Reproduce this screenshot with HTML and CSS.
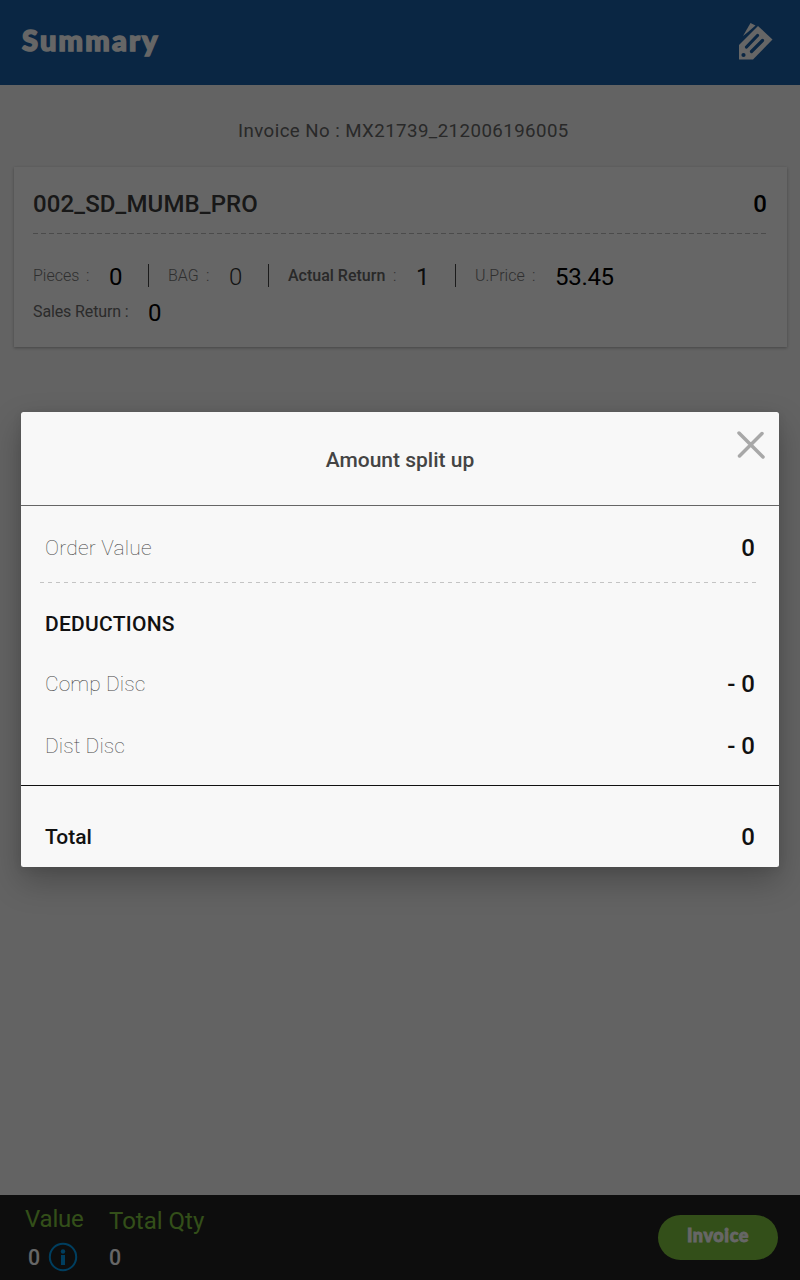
FILE: index.html
```html
<!DOCTYPE html>
<html lang="en">
<head>
<meta charset="utf-8">
<title>Summary</title>
<link rel="stylesheet" href="styles.css">
</head>
<body>
<div class="screen">
  <header class="topbar">
    <h1 class="topbar-title">Summary</h1>
    <svg class="tag-icon" width="36" height="40" viewBox="0 0 36 40">
      <path d="M5 14 L12.500 1 L17.500 3.500 L10 10 Z" fill="#fff"/>
      <path d="M20 4 L34.500 17.500 L15 37.500 H1 V23 Z" fill="#fff"/>
      <path d="M8.500 25 L19.500 13.500 M13.500 29.500 L24.500 18.500" stroke="#195fa9" stroke-width="3.200" stroke-linecap="round"/>
      <circle cx="5.500" cy="33" r="2.100" fill="#195fa9"/>
    </svg>
  </header>
  <main class="content">
    <p class="invoice-no">Invoice No : MX21739_212006196005</p>
    <section class="card">
      <div class="card-head"><span class="product">002_SD_MUMB_PRO</span><span class="product-value">0</span></div>
      <div class="dashes"></div>
      <div class="stats">
        <div class="stat pieces"><span class="label">Pieces</span><span class="colon">:</span><span class="num">0</span></div>
        <div class="stat bag"><span class="label">BAG</span><span class="colon">:</span><span class="num">0</span></div>
        <div class="stat actual"><span class="label">Actual Return</span><span class="colon">:</span><span class="num">1</span></div>
        <div class="stat price"><span class="label">U.Price</span><span class="colon">:</span><span class="num">53.45</span></div>
      </div>
      <div class="sales"><span class="label">Sales Return :</span><span class="num">0</span></div>
    </section>
  </main>
  <footer class="bottombar">
    <div class="total value"><span class="total-label">Value</span>
      <span class="total-num">0
        <svg class="info-icon" width="30" height="30" viewBox="0 0 30 30"><circle cx="15" cy="15" r="13.200" fill="none" stroke="#009cee" stroke-width="2"/><circle cx="15" cy="9.500" r="2.200" fill="#009cee"/><path d="M13 13h4v10h-4z" fill="#009cee"/></svg>
      </span>
    </div>
    <div class="total qty"><span class="total-label">Total Qty</span><span class="total-num">0</span></div>
    <button class="invoice-button">Invoice</button>
  </footer>
</div>
<div class="overlay">
  <section class="dialog">
    <div class="dialog-head">
      <h2 class="dialog-title">Amount split up</h2>
      <svg class="close-icon" width="30" height="30" viewBox="0 0 30 30"><path d="M3 3 L27 27 M26 3.500 L3.500 26" stroke="#a8a8a8" stroke-width="3.500" stroke-linecap="round"/></svg>
    </div>
    <div class="row order"><span class="thin">Order Value</span><span class="amount">0</span></div>
    <div class="dashes dialog-dashes"></div>
    <h3 class="deductions">DEDUCTIONS</h3>
    <div class="row comp"><span class="thin narrow">Comp Disc</span><span class="amount">- 0</span></div>
    <div class="row dist"><span class="thin narrow">Dist Disc</span><span class="amount">- 0</span></div>
    <div class="row sum"><span class="sum-label">Total</span><span class="amount">0</span></div>
  </section>
</div>
</body>
</html>
```
FILE: styles.css
```css
* { box-sizing: border-box; }
body { margin: 0; font-family: Roboto, sans-serif; color: #000; }
h1, h2, h3, p { margin: 0; }
.screen { width: 800px; height: 1280px; display: flex; flex-direction: column; background: #f7f7f7; }
.topbar { height: 85px; background: #195fa9; display: flex; justify-content: space-between; padding: 22px 26px 0 22px; }
.topbar-title { font: 900 29px/35px Lato, sans-serif; letter-spacing: 2.2px; color: #fff; -webkit-text-stroke: 1.5px #fff; }
.content { flex: 1; }
.invoice-no { padding: 34px 0 0 238px; font-size: 18.670px; line-height: 24px; letter-spacing: 0.44px; color: #666; }
.card { margin: 24px 13px 0 14px; height: 180px; background: #fff; padding: 22px 20px 0 19px; box-shadow: 0 1px 3px rgba(0,0,0,.3); }
.card-head { display: flex; justify-content: space-between; font-size: 24px; line-height: 30px; font-weight: 500; }
.product { color: #3c3c3c; letter-spacing: 0.12px; }
.dashes { height: 1px; background: repeating-linear-gradient(90deg, #c4c4c4 0 4px, transparent 4px 8px); }
.card-head + .dashes { margin-top: 14px; background: repeating-linear-gradient(90deg, #bbb 0 5px, transparent 5px 8px); }
.stats { display: flex; margin-top: 28px; height: 30px; }
.stat { display: flex; align-items: flex-start; height: 30px; line-height: 28px; font-size: 16px; color: #777; }
.stat + .stat { padding-left: 20px; background: linear-gradient(#444, #444) 0 2px / 1px 23px no-repeat; }
.num { font-size: 24px; line-height: 30px; color: #000; }
.pieces { width: 115px; font-weight: 300; }
.pieces .label { width: 53px; }
.pieces .colon { width: 23px; }
.pieces .num { font-weight: 400; }
.bag { width: 120px; font-weight: 300; }
.bag .label { width: 38px; }
.bag .colon { width: 23px; }
.bag .num { color: #333; }
.actual { width: 187px; }
.actual .label { width: 105px; font-weight: 500; color: #666; }
.actual .colon { width: 23px; font-weight: 300; }
.actual .num { color: #222; }
.price .label { width: 57px; font-weight: 300; }
.price .colon { width: 23px; font-weight: 300; }
.price .num { letter-spacing: -0.3px; }
.sales { display: flex; align-items: flex-start; margin-top: 6px; line-height: 28px; font-size: 16px; color: #6c6c6c; }
.sales .label { width: 115px; letter-spacing: -0.12px; }
.bottombar { height: 85px; background: #212121; display: flex; padding-left: 25px; }
.total { display: flex; flex-direction: column; }
.total-label { font-size: 24px; line-height: 30px; color: #80c53f; }
.total-num { display: flex; font-size: 21.330px; line-height: 32px; color: #fff; font-weight: 500; }
.value { width: 84px; padding-top: 9px; }
.value .total-label { letter-spacing: -0.2px; }
.value .total-num { padding: 8px 0 0 3px; gap: 8px; }
.qty { padding-top: 11px; }
.qty .total-num { padding-top: 6px; }
.invoice-button { margin: 20px 22px 0 auto; width: 120px; height: 45px; border: 0; border-radius: 23px; padding: 0 0 5px; background: #80c53f; color: #fff; font: 900 18px/24px Lato, sans-serif; letter-spacing: 0.6px; -webkit-text-stroke: 0.8px #fff; }
.overlay { position: absolute; inset: 0; background: rgba(0,0,0,.6); padding: 412px 21px 0; }
.dialog { height: 455px; background: #f8f8f8; border-radius: 2.500px; box-shadow: 0 14px 32px rgba(0,0,0,.25), 0 2px 10px rgba(0,0,0,.08); color: #111; }
.dialog-head { height: 94px; border-bottom: 1px solid #666; position: relative; padding-top: 33px; }
.dialog-title { font-size: 21px; line-height: 30px; font-weight: 500; text-align: center; color: #444; }
.close-icon { position: absolute; right: 13px; top: 18px; }
.row { display: flex; justify-content: space-between; padding: 0 24px; line-height: 30px; }
.thin { font-size: 21px; font-weight: 100; letter-spacing: 0.2px; color: #444; }
.narrow { letter-spacing: 0.08px; }
.amount { font-size: 24px; font-weight: 500; }
.order { padding-top: 27px; }
.dialog-dashes { margin: 19px 23px 0 19px; }
.deductions { padding: 26px 24px 0; font-size: 21px; line-height: 30px; font-weight: 500; letter-spacing: 0.25px; }
.comp { padding-top: 30px; }
.dist { padding-top: 32px; }
.sum { margin-top: 24px; border-top: 1px solid #111; padding-top: 36px; }
.sum-label { font-size: 21px; font-weight: 500; }
```
